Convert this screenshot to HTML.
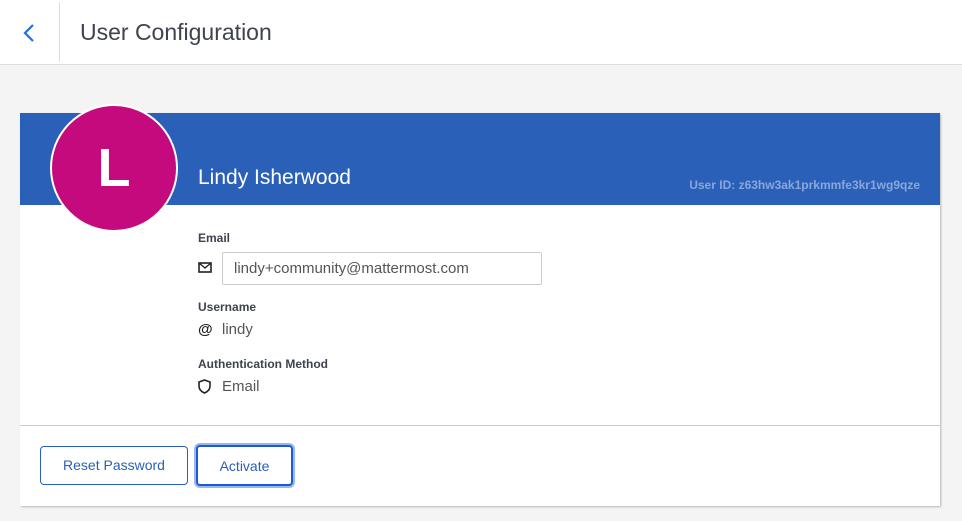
<!DOCTYPE html>
<html><head><style>
body{margin:0;width:962px;height:521px;background:#f4f4f4;font-family:"Liberation Sans",sans-serif;position:relative;overflow:hidden;color:#3d3c40}
.top{position:absolute;left:0;top:0;width:962px;height:64px;background:#fff;border-bottom:1px solid #ddd}
.sep{position:absolute;left:59px;top:2px;width:1px;height:60px;background:#ddd}
.title{position:absolute;left:80px;top:19px;font-size:23px;color:#3f4350}
.card{position:absolute;left:20px;top:113px;width:920px;height:393px;background:#fff;box-shadow:1px 1px 2px rgba(0,0,0,.25)}
.hdr{position:absolute;left:0;top:0;width:920px;height:92px;background:#2a60b8}
.av{position:absolute;left:30px;top:-9px;width:124px;height:124px;border-radius:50%;background:#c40a7c;border:2px solid #fff;color:#fff;font-size:54px;font-weight:bold;text-align:center;line-height:124px}
.name{position:absolute;left:178px;top:53px;color:#fff;font-size:21px}
.uid{position:absolute;right:20px;top:65px;color:#8aa6dc;font-size:12px;font-weight:bold}
.lbl{position:absolute;left:178px;font-size:12px;color:#3f4350;font-weight:bold}
.val{position:absolute;left:202px;font-size:15px;color:#555}
.ic{position:absolute;left:178px}
.inp{position:absolute;left:202px;top:139px;border:1px solid #ccc;border-radius:2px;font-size:15px;color:#555;line-height:31px;padding-left:11px;box-sizing:border-box;width:320px;height:33px}
.div{position:absolute;left:0;top:312px;width:920px;height:1px;background:#ccc}
.btn{position:absolute;box-sizing:border-box;border:1px solid #2a60b8;border-radius:4px;color:#2a60b8;font-size:14px;text-align:center;background:#fff}
</style></head><body>
<div class="top"><div class="sep"></div>
<svg style="position:absolute;left:22px;top:23px" width="14" height="20" viewBox="0 0 14 20"><path d="M11 2 L3 10 L11 18" stroke="#1f6fe0" stroke-width="2.2" fill="none"/></svg>
<div class="title">User Configuration</div></div>
<div class="card">
<div class="hdr"><div class="name">Lindy Isherwood</div><div class="uid">User ID: z63hw3ak1prkmmfe3kr1wg9qze</div></div>
<div class="av">L</div>
<div class="lbl" style="top:118px">Email</div>
<svg class="ic" style="top:149px" width="14" height="11" viewBox="0 0 14 11"><rect x="1" y="1" width="12" height="9" fill="none" stroke="#222" stroke-width="1.6"/><path d="M1 1 L7 6 L13 1" fill="none" stroke="#222" stroke-width="1.4"/></svg>
<div class="inp">lindy+community@mattermost.com</div>
<div class="lbl" style="top:187px">Username</div>
<div style="position:absolute;left:178px;top:208px;font-size:15px;font-weight:bold;color:#222">@</div>
<div class="val" style="top:208px">lindy</div>
<div class="lbl" style="top:244px">Authentication Method</div>
<svg class="ic" style="top:266px" width="13" height="15" viewBox="0 0 13 15"><path d="M6.5 1 L12 3 V7 C12 10.5 9.5 12.8 6.5 14 C3.5 12.8 1 10.5 1 7 V3 Z" fill="none" stroke="#222" stroke-width="1.6"/></svg>
<div class="val" style="top:265px">Email</div>
<div class="div"></div>
<div class="btn" style="left:20px;top:333px;width:148px;height:39px;line-height:37px">Reset Password</div>
<div class="btn" style="left:176px;top:332px;width:97px;height:41px;line-height:39px;border:2px solid #1f5ad6;box-shadow:0 0 0 2px #9ab8ee">Activate</div>
</div>
</body></html>
